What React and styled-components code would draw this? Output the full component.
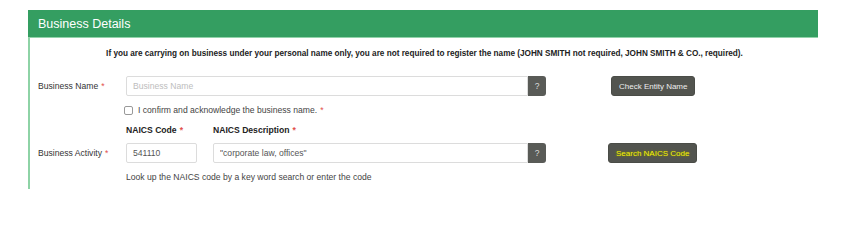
import React from "react";
import styled, { createGlobalStyle } from "styled-components";

const Global = createGlobalStyle`
  html, body { margin: 0; padding: 0; background: #fff; }
  body { font-family: "Liberation Sans", Arial, sans-serif; color: #333; }
  * { box-sizing: border-box; }
`;

const Page = styled.div`
  padding: 10px 31px 0 28px;
`;

const Card = styled.section`
  display: flex;
  flex-direction: column;
`;

const Header = styled.div`
  background: #349e61;
  color: #fff;
  font-size: 12.5px;
  line-height: 27px;
  padding: 1px 0 0 10px;
  border-bottom: 1px solid #92d3aa;
  height: 28px;
`;

const Body = styled.div`
  border-left: 2px solid #8ed3a6;
  padding: 10px 0 7px 8px;
  display: flex;
  flex-direction: column;
`;

const Notice = styled.p`
  margin: 0;
  text-align: center;
  font-weight: bold;
  font-size: 8.2px;
  color: #222;
  padding-right: 7px;
  line-height: 12px;
`;

const Row = styled.div`
  display: grid;
  grid-template-columns: 88px 1fr;
  align-items: center;
  margin-top: ${(p) => p.$mt || 0}px;
`;

const Label = styled.label`
  font-size: 8.6px;
  color: #333;
`;

const Req = styled.span`
  color: #e2504c;
  margin-left: 3px;
`;

const Field = styled.div`
  display: flex;
  align-items: center;
`;

const InputGroup = styled.div`
  display: flex;
  align-items: stretch;
  width: ${(p) => p.$w}px;
  margin-left: ${(p) => p.$ml || 0}px;
  height: 20px;
`;

const Input = styled.input`
  flex: 1;
  min-width: 0;
  border: 1px solid #dcdcdc;
  border-radius: 2px 0 0 2px;
  padding: 0 6px;
  font-family: "Liberation Sans", Arial, sans-serif;
  font-size: 8.6px;
  color: #555;
  outline: none;
  &::placeholder { color: #bdbdbd; }
`;

const SoloInput = styled(Input)`
  flex: none;
  width: ${(p) => p.$w}px;
  height: 20px;
  border-radius: 2px;
`;

const Help = styled.button`
  width: 18px;
  border: none;
  background: #595b57;
  color: #ddd;
  border-radius: 0 3px 3px 0;
  font-size: 8.5px;
  font-family: "Liberation Sans", Arial, sans-serif;
  padding: 0;
`;

const ActionButton = styled.button`
  height: 20px;
  margin-left: ${(p) => p.$ml}px;
  padding: 0 ${(p) => p.$px}px;
  background: #52544f;
  color: ${(p) => (p.$hl ? "#f4f400" : "#eee")};
  border: 1px solid #4a4c47;
  border-radius: 3px;
  font-size: 8px;
  font-family: "Liberation Sans", Arial, sans-serif;
  text-shadow: ${(p) => (p.$hl ? "0 0 3px #8a8a00" : "none")};
  white-space: nowrap;
`;

const CheckLine = styled.div`
  display: flex;
  align-items: center;
  gap: 5px;
  font-size: 8.6px;
  color: #444;
  margin-left: -2px;
`;

const Box = styled.span`
  width: 9px;
  height: 9px;
  border: 1px solid #999;
  border-radius: 2px;
  background: #fff;
`;

const ColHeads = styled.div`
  display: flex;
  font-size: 8.6px;
  font-weight: bold;
  color: #222;
`;

const ColHead = styled.span`
  width: ${(p) => p.$w}px;
`;

const Note = styled.div`
  font-size: 8.6px;
  color: #444;
`;

export default function App() {
  return (
    <>
      <Global />
      <Page>
        <Card>
          <Header>Business Details</Header>
          <Body>
            <Notice>
              If you are carrying on business under your personal name only, you are not required to register the name (JOHN SMITH not required, JOHN SMITH &amp; CO., required).
            </Notice>
            <Row $mt={16}>
              <Label>Business Name<Req>*</Req></Label>
              <Field>
                <InputGroup $w={420}>
                  <Input placeholder="Business Name" />
                  <Help>?</Help>
                </InputGroup>
                <ActionButton $ml={65} $px={7}>Check Entity Name</ActionButton>
              </Field>
            </Row>
            <Row $mt={9}>
              <span />
              <CheckLine>
                <Box />
                <span>I confirm and acknowledge the business name.<Req>*</Req></span>
              </CheckLine>
            </Row>
            <Row $mt={10}>
              <span />
              <ColHeads>
                <ColHead $w={87}>NAICS Code<Req>*</Req></ColHead>
                <ColHead $w={120}>NAICS Description<Req>*</Req></ColHead>
              </ColHeads>
            </Row>
            <Row $mt={8}>
              <Label>Business Activity<Req>*</Req></Label>
              <Field>
                <SoloInput $w={71} defaultValue="541110" />
                <InputGroup $w={333} $ml={16}>
                  <Input defaultValue={'"corporate law, offices"'} />
                  <Help>?</Help>
                </InputGroup>
                <ActionButton $ml={62} $px={7} $hl>Search NAICS Code</ActionButton>
              </Field>
            </Row>
            <Row $mt={9}>
              <span />
              <Note>Look up the NAICS code by a key word search or enter the code</Note>
            </Row>
          </Body>
        </Card>
      </Page>
    </>
  );
}
